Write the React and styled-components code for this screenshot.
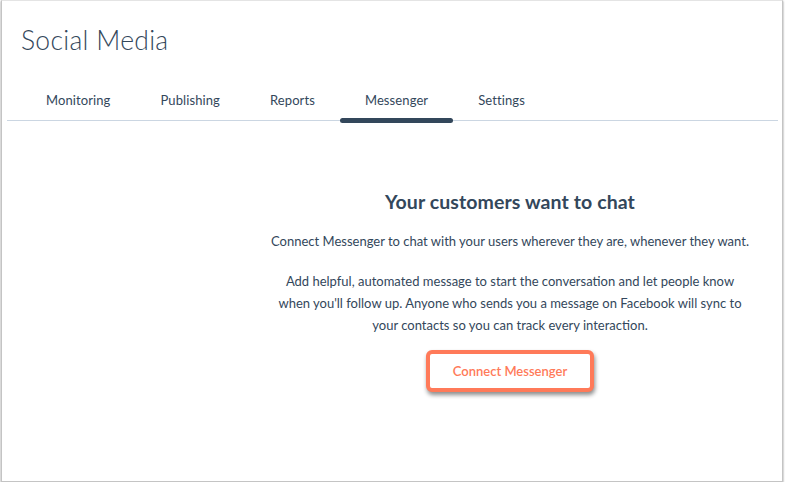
import React from "react"
import styled, { createGlobalStyle } from "styled-components"

const tabs = ["Monitoring", "Publishing", "Reports", "Messenger", "Settings"]

function App() {
  return (
    <>
      <GlobalStyle />
      <Window>
        <Header>
          <Title>Social Media</Title>
        </Header>
        <TabBar>
          {tabs.map((tab) => (
            <Tab key={tab} active={tab === "Messenger"}>
              {tab}
            </Tab>
          ))}
        </TabBar>
        <Body>
          <Sidebar />
          <Content>
            <Heading>Your customers want to chat</Heading>
            <Text>Connect Messenger to chat with your users wherever they are, whenever they want.</Text>
            <Text>
              Add helpful, automated message to start the conversation and let people know
              <br />
              when you'll follow up. Anyone who sends you a message on Facebook will sync to
              <br />
              your contacts so you can track every interaction.
            </Text>
            <ConnectButton>Connect Messenger</ConnectButton>
          </Content>
        </Body>
      </Window>
    </>
  )
}

const GlobalStyle = createGlobalStyle`
  body {
    margin: 0;
    background: #ffffff;
    font-family: Lato, "Open Sans", sans-serif;
    color: #33475b;
  }
`

const Window = styled.div`
  box-sizing: border-box;
  margin-left: 1px;
  width: 782px;
  height: 482px;
  border: 1px solid #c4c4c4;
  border-top-color: #e4e4e4;
  background: #ffffff;
  box-shadow: 0 1px 2px rgba(0, 0, 0, 0.45);
  display: flex;
  flex-direction: column;
`

const Header = styled.div`
  padding: 23px 0 0 19px;
  height: 51px;
`

const Title = styled.h1`
  margin: 0;
  font-size: 26.5px;
  font-weight: 300;
  letter-spacing: 0.3px;
  color: #33475b;
`

const TabBar = styled.div`
  display: flex;
  margin: 0 4px 0 5px;
  padding-left: 14px;
  border-bottom: 1px solid #cbd6e2;
  height: 45px;
`

const Tab = styled.div`
  position: relative;
  padding: 17px 25px 0;
  font-size: 13px;
  color: #33475b;
  letter-spacing: 0.1px;

  &::after {
    content: "";
    display: ${(p) => (p.active ? "block" : "none")};
    position: absolute;
    left: 0;
    right: 0;
    bottom: -3px;
    height: 5px;
    border-radius: 3px;
    background: #33475b;
  }
`

const Body = styled.div`
  display: grid;
  grid-template-columns: 236px 1fr;
  padding-top: 69px;
`

const Sidebar = styled.div``

const Content = styled.div`
  display: flex;
  flex-direction: column;
  align-items: center;
  text-align: center;
`

const Heading = styled.h2`
  margin: 0 0 17px;
  font-size: 19.5px;
  font-weight: 700;
  letter-spacing: 0.1px;
  color: #33475b;
`

const Text = styled.p`
  margin: 0 0 18px;
  font-size: 13px;
  line-height: 22px;
  color: #33475b;
`

const ConnectButton = styled.button`
  margin-top: -4px;
  width: 168px;
  height: 42px;
  border: 4px solid #ff7a59;
  border-radius: 6px;
  background: #ffffff;
  color: #ff7a59;
  font-family: Lato, "Open Sans", sans-serif;
  font-size: 13px;
  font-weight: 600;
  box-shadow: 1px 3px 4px rgba(0, 0, 0, 0.45);
`

export default App
